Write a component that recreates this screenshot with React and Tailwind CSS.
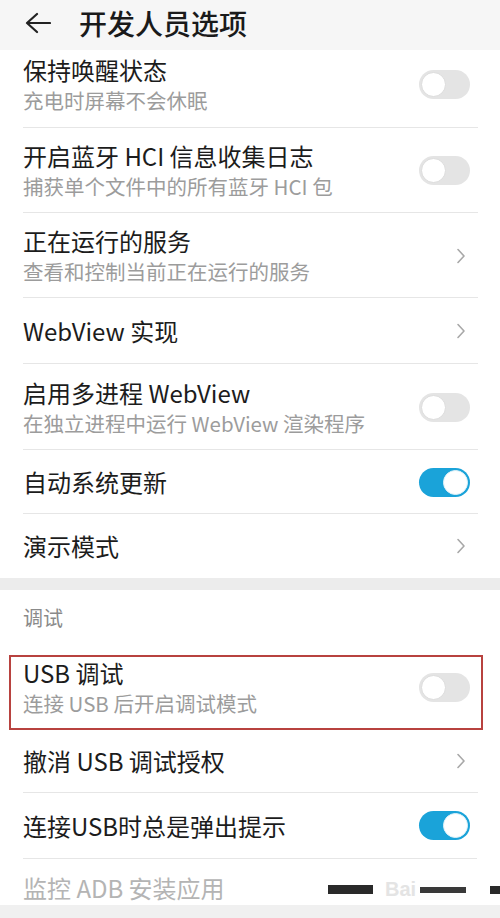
import React from "react";

const Toggle = ({ on }) =>
  on ? (
    <div className="w-[51px] h-[29px] rounded-full bg-[#1aa3d9] flex items-center justify-end pr-[2px]">
      <div className="w-[25px] h-[25px] rounded-full bg-white border border-[#e0f2f9]"></div>
    </div>
  ) : (
    <div className="w-[51px] h-[29px] rounded-full bg-[#e4e4e4] flex items-center pl-[2px]">
      <div className="w-[25px] h-[25px] rounded-full bg-white border border-[#dcdcdc]"></div>
    </div>
  );

const Chevron = () => (
  <svg width="10" height="16" viewBox="0 0 10 16" className="mr-[4px]">
    <path d="M2 1.5 L8 8 L2 14.5" fill="none" stroke="#a8a8a8" strokeWidth="1.6" strokeLinecap="round" strokeLinejoin="round" />
  </svg>
);

const Row = ({ title, sub, right, h, divider = true, dim }) => (
  <div className={`relative flex items-center justify-between pl-[23px] pr-[30px] ${h}`}>
    <div className="flex flex-col">
      <div className={`text-[24px] leading-[30px] ${dim ? "text-[#b4b4b4]" : "text-[#1c1c1c]"}`}>{title}</div>
      {sub && <div className="text-[20.5px] leading-[28px] mt-[1px] text-[#9c9c9c]">{sub}</div>}
    </div>
    {right}
    {divider && <div className="absolute bottom-0 left-[23px] right-[22px] h-px bg-[#e6e6e6]"></div>}
  </div>
);

export default function App() {
  return (
    <div
      className="w-[500px] h-[918px] overflow-hidden bg-white relative"
      style={{ fontFamily: '"Noto Sans CJK SC", "Noto Sans", sans-serif' }}
    >
      {/* header */}
      <div className="h-[50px] bg-[#f6f6f6] flex items-center pl-[25px] pb-[5px]">
        <svg width="26" height="22" viewBox="0 0 26 22">
          <path d="M12 2 L2 11 L12 20 M2 11 H25" fill="none" stroke="#222" strokeWidth="2.2" strokeLinecap="round" strokeLinejoin="round" />
        </svg>
        <div className="ml-[28px] text-[28px] font-medium text-[#1a1a1a] leading-none">开发人员选项</div>
      </div>

      <div>
        <Row h="h-[78px] pb-[10px]" title="保持唤醒状态" sub="充电时屏幕不会休眠" right={<Toggle />} />
        <Row h="h-[85px]" title="开启蓝牙 HCI 信息收集日志" sub="捕获单个文件中的所有蓝牙 HCI 包" right={<Toggle />} />
        <Row h="h-[85px]" title="正在运行的服务" sub="查看和控制当前正在运行的服务" right={<Chevron />} />
        <Row h="h-[66px]" title="WebView 实现" right={<Chevron />} />
        <Row h="h-[86px]" title="启用多进程 WebView" sub="在独立进程中运行 WebView 渲染程序" right={<Toggle />} />
        <Row h="h-[64px]" title="自动系统更新" right={<Toggle on />} />
        <Row h="h-[64px]" title="演示模式" right={<Chevron />} divider={false} />
      </div>

      <div className="h-[12px] bg-[#ececec]"></div>

      <div className="h-[56px] flex items-center pl-[23px] text-[20px] text-[#8a8a8a]">调试</div>

      <div className="relative">
        <Row h="h-[83px]" title="USB 调试" sub="连接 USB 后开启调试模式" right={<Toggle />} divider={false} />
        <div className="absolute left-[9px] right-[17px] top-[9px] bottom-[-1px] border-2 border-[#b8423f]"></div>
      </div>
      <Row h="h-[64px]" title="撤消 USB 调试授权" right={<Chevron />} />
      <Row h="h-[65px]" title="连接USB时总是弹出提示" right={<Toggle on />} divider={false} />
      <div className="h-px mx-[23px] bg-[#e6e6e6]"></div>
      <Row h="h-[46px] pt-[12px]" title="监控 ADB 安装应用" dim divider={false} />
      <div className="h-[14px] bg-[#f0f0f0]"></div>

      {/* redaction marks and watermark */}
      <div className="absolute left-[328px] top-[885px] w-[45px] h-[9px] bg-[#2a2a2a]"></div>
      <div className="absolute left-[420px] top-[887px] w-[46px] h-[6px] bg-[#3a3a3a]"></div>
      <div className="absolute left-[490px] top-[886px] w-[10px] h-[8px] bg-[#2a2a2a]"></div>
      <div className="absolute left-[385px] top-[874px] text-[20px] text-[#e4e4e4] font-semibold" style={{ fontFamily: '"Liberation Sans", sans-serif' }}>
        Bai
      </div>
    </div>
  );
}
